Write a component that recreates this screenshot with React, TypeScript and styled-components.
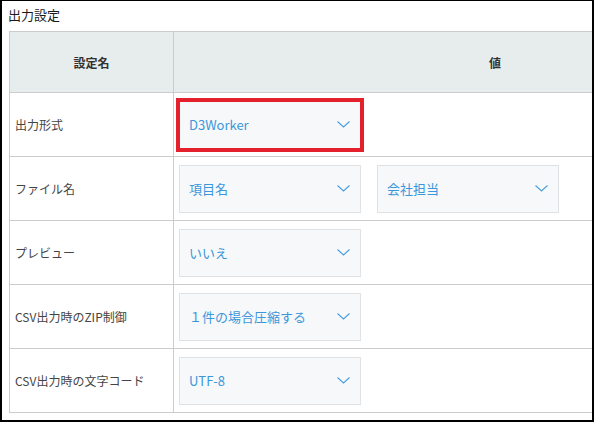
import React from 'react';
import styled, {createGlobalStyle} from 'styled-components';

const GlobalStyle = createGlobalStyle`
    body {
        margin: 0;
        font-family: "Noto Sans CJK JP", "Noto Sans", sans-serif;
        background: #ffffff;
    }
`;

type Field = {
    label: string;
    values: string[];
    focused?: boolean;
};

const fields: Field[] = [
    {label: '出力形式', values: ['D3Worker'], focused: true},
    {label: 'ファイル名', values: ['項目名', '会社担当']},
    {label: 'プレビュー', values: ['いいえ']},
    {label: 'CSV出力時のZIP制御', values: ['１件の場合圧縮する']},
    {label: 'CSV出力時の文字コード', values: ['UTF-8']},
];

const Chevron = () => (
    <svg width="13" height="7" viewBox="0 0 13 7" fill="none">
        <path d="M0.5 0.5 L6.5 6 L12.5 0.5" stroke="#4a9ee0" strokeWidth="1.1"/>
    </svg>
);

export default function App() {
    return (
        <>
            <GlobalStyle/>
            <Frame>
                <Heading>出力設定</Heading>
                <Table>
                    <thead>
                    <tr>
                        <HeadCell $width={163}>設定名</HeadCell>
                        <HeadCell>値</HeadCell>
                    </tr>
                    </thead>
                    <tbody>
                    {fields.map(field => (
                        <Row key={field.label}>
                            <LabelCell>{field.label}</LabelCell>
                            <ValueCell>
                                <Selects>
                                    {field.values.map(v => (
                                        <Select key={v} $focused={field.focused}>
                                            <span>{v}</span>
                                            <Chevron/>
                                        </Select>
                                    ))}
                                </Selects>
                            </ValueCell>
                        </Row>
                    ))}
                    </tbody>
                </Table>
            </Frame>
        </>
    );
}

const Frame = styled.div`
    width: 594px;
    height: 422px;
    box-sizing: border-box;
    border: 2px solid #000;
    border-top-width: 1px;
    overflow: hidden;
    padding: 0 0 0 7px;
`;

const Heading = styled.div`
    font-size: 13px;
    font-weight: 400;
    color: #1a1a1a;
    line-height: 20px;
    padding: 4px 0 6px;
    margin-left: -1px;
`;

const Table = styled.table`
    border-collapse: collapse;
    width: 808px;
    table-layout: fixed;
    border: 1px solid #cccccc;
`;

const HeadCell = styled.th<{ $width?: number }>`
    width: ${p => (p.$width ? `${p.$width}px` : 'auto')};
    height: 60px;
    background: #e6edec;
    border: 1px solid #cccccc;
    font-size: 12px;
    font-weight: 700;
    color: #333;
    text-align: center;
    padding: 0;
`;

const Row = styled.tr`
    height: 64px;
`;

const LabelCell = styled.td`
    border: 1px solid #cccccc;
    font-size: 12px;
    color: #444;
    padding: 0 0 0 5px;
    white-space: nowrap;
`;

const ValueCell = styled.td`
    border: 1px solid #cccccc;
    padding: 0 0 0 5px;
`;

const Selects = styled.div`
    display: flex;
    gap: 16px;
    align-items: center;
`;

const Select = styled.div<{ $focused?: boolean }>`
    width: 182px;
    height: 48px;
    box-sizing: border-box;
    display: flex;
    align-items: center;
    justify-content: space-between;
    padding: 0 10px 0 9px;
    background: #f7f8fa;
    border: 1px solid #dfe2e5;
    color: #3b97d9;
    font-size: 13px;
    font-weight: 400;
    outline: ${p => (p.$focused ? '4px solid #e3202b' : 'none')};
    outline-offset: -1px;
`;
